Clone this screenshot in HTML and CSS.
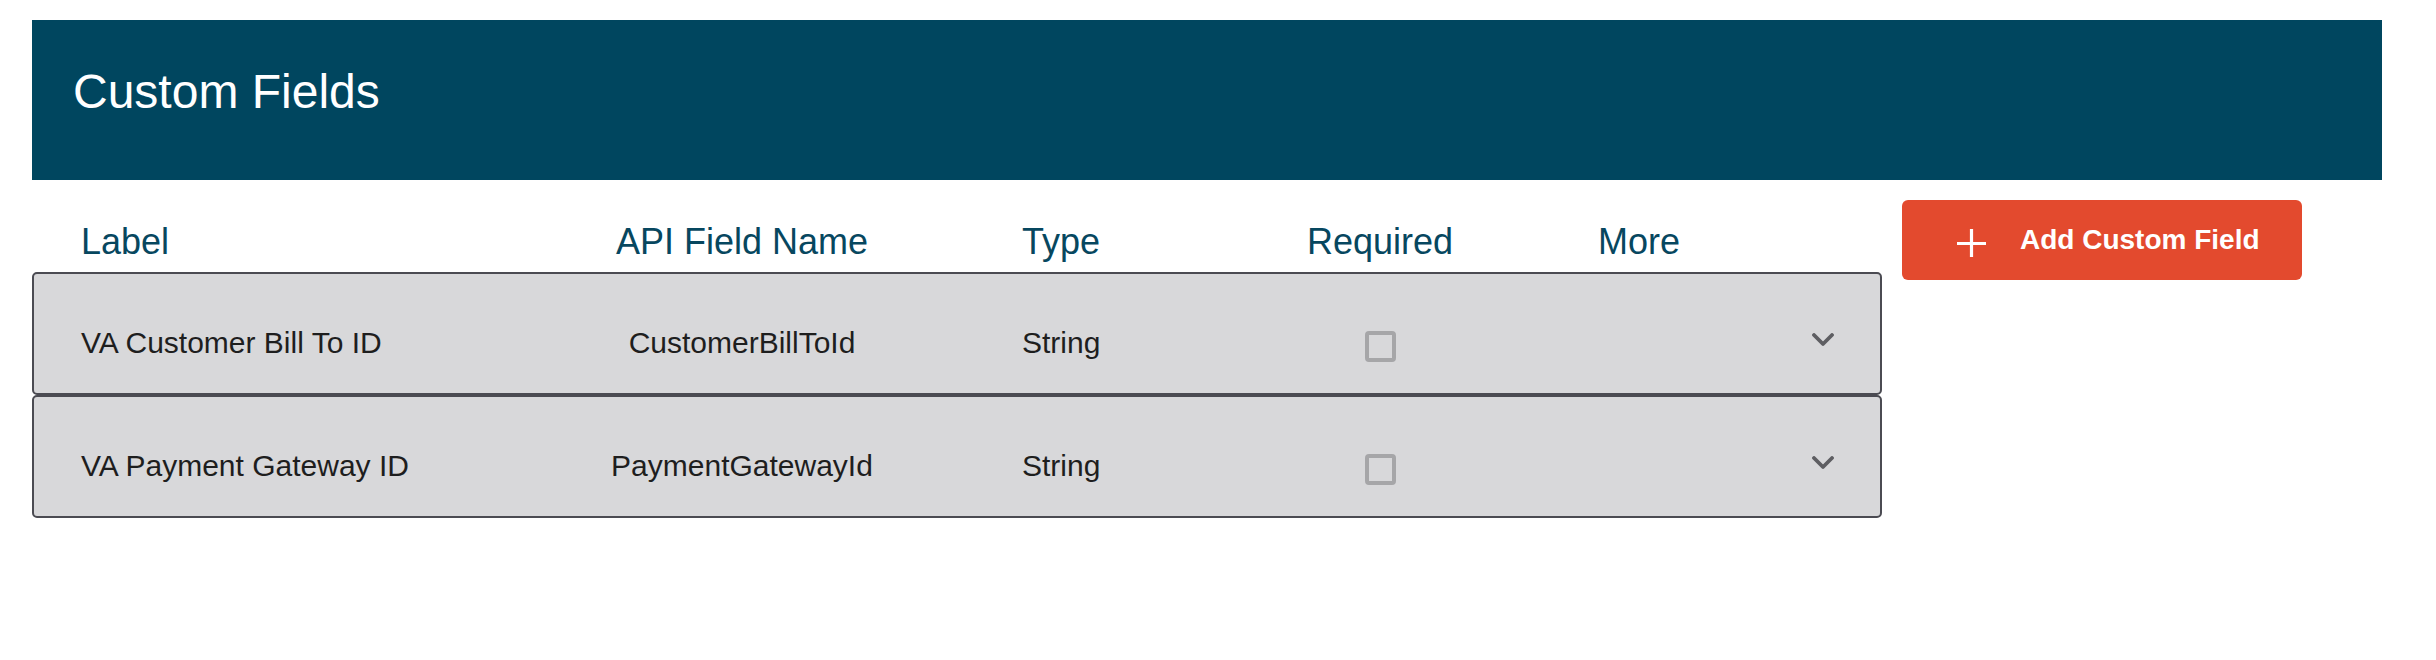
FILE: index.html
```html
<!DOCTYPE html>
<html lang="en">
<head>
<meta charset="utf-8">
<title>Custom Fields</title>
<link rel="stylesheet" href="styles.css">
</head>
<body>
<div class="page">
  <header class="banner">
    <h1 class="banner-title">Custom Fields</h1>
  </header>
  <div class="content">
    <section class="table">
      <div class="grid col-head">
        <div class="c-label">Label</div>
        <div class="c-api">API Field Name</div>
        <div class="c-type">Type</div>
        <div class="c-req">Required</div>
        <div class="c-more">More</div>
      </div>
      <div class="grid row">
        <div class="c-label">VA Customer Bill To ID</div>
        <div class="c-api">CustomerBillToId</div>
        <div class="c-type">String</div>
        <div class="c-req"><span class="checkbox"></span></div>
        <div class="c-more"><svg class="chevron" width="22" height="14" viewBox="0 0 22 14"><polyline points="2,2 11,11 20,2" fill="none" stroke="#5e5e62" stroke-width="3.8" stroke-linecap="round" stroke-linejoin="round"/></svg></div>
      </div>
      <div class="grid row">
        <div class="c-label">VA Payment Gateway ID</div>
        <div class="c-api">PaymentGatewayId</div>
        <div class="c-type">String</div>
        <div class="c-req"><span class="checkbox"></span></div>
        <div class="c-more"><svg class="chevron" width="22" height="14" viewBox="0 0 22 14"><polyline points="2,2 11,11 20,2" fill="none" stroke="#5e5e62" stroke-width="3.8" stroke-linecap="round" stroke-linejoin="round"/></svg></div>
      </div>
    </section>
    <button class="add-btn" type="button">
      <svg class="plus" width="29" height="28" viewBox="0 0 29 28"><path d="M0 14.5H29M14.5 0V28" stroke="#ffffff" stroke-width="3.2" fill="none"/></svg>
      <span>Add Custom Field</span>
    </button>
  </div>
</div>
</body>
</html>
```

FILE: styles.css
```css
* { box-sizing: border-box; }

body {
  margin: 0;
  background: #ffffff;
  font-family: "Liberation Sans", Arial, Helvetica, sans-serif;
}

.page {
  padding: 20px 54px 0 32px;
}

.banner {
  height: 160px;
  background: #00465f;
  padding: 44px 0 0 41px;
}

.banner-title {
  margin: 0;
  font-size: 48px;
  font-weight: 400;
  line-height: normal;
  color: #ffffff;
}

.content {
  display: flex;
  align-items: flex-start;
}

.table {
  width: 1850px;
  flex: none;
}

.grid {
  display: grid;
  grid-template-columns: 381px 560px 238px 240px 334px;
  padding: 0 46px 0 47px;
  border: 2px solid transparent;
}

.col-head {
  padding-top: 39px;
  height: 92px;
  font-size: 36px;
  line-height: normal;
  color: #07475f;
}

.col-head .c-more { padding-left: 98px; }

.row {
  height: 123px;
  padding-top: 52px;
  background: #d8d8da;
  border-color: #4b4b52;
  border-radius: 5px;
  font-size: 30px;
  line-height: normal;
  color: #1e1e1e;
}

.c-api { text-align: center; }
.c-req { text-align: center; }

.row .c-req { display: flex; justify-content: center; padding-top: 5px; }
.row .c-more { display: flex; justify-content: flex-end; padding-top: 7px; }

.checkbox {
  display: block;
  width: 31px;
  height: 31px;
  border: 4px solid #a6a6a8;
  border-radius: 4px;
  background: #d8d8da;
}

.chevron { display: block; }

.add-btn {
  flex: none;
  margin: 20px 0 0 20px;
  width: 400px;
  height: 80px;
  padding: 0 0 0 55px;
  display: flex;
  align-items: center;
  background: #e34a2e;
  border: none;
  border-radius: 6px;
  color: #ffffff;
  font-family: "Liberation Sans", Arial, Helvetica, sans-serif;
  font-size: 28px;
  font-weight: 700;
  cursor: pointer;
}

.plus {
  display: block;
  margin: 6px 34px 0 0;
}
```
